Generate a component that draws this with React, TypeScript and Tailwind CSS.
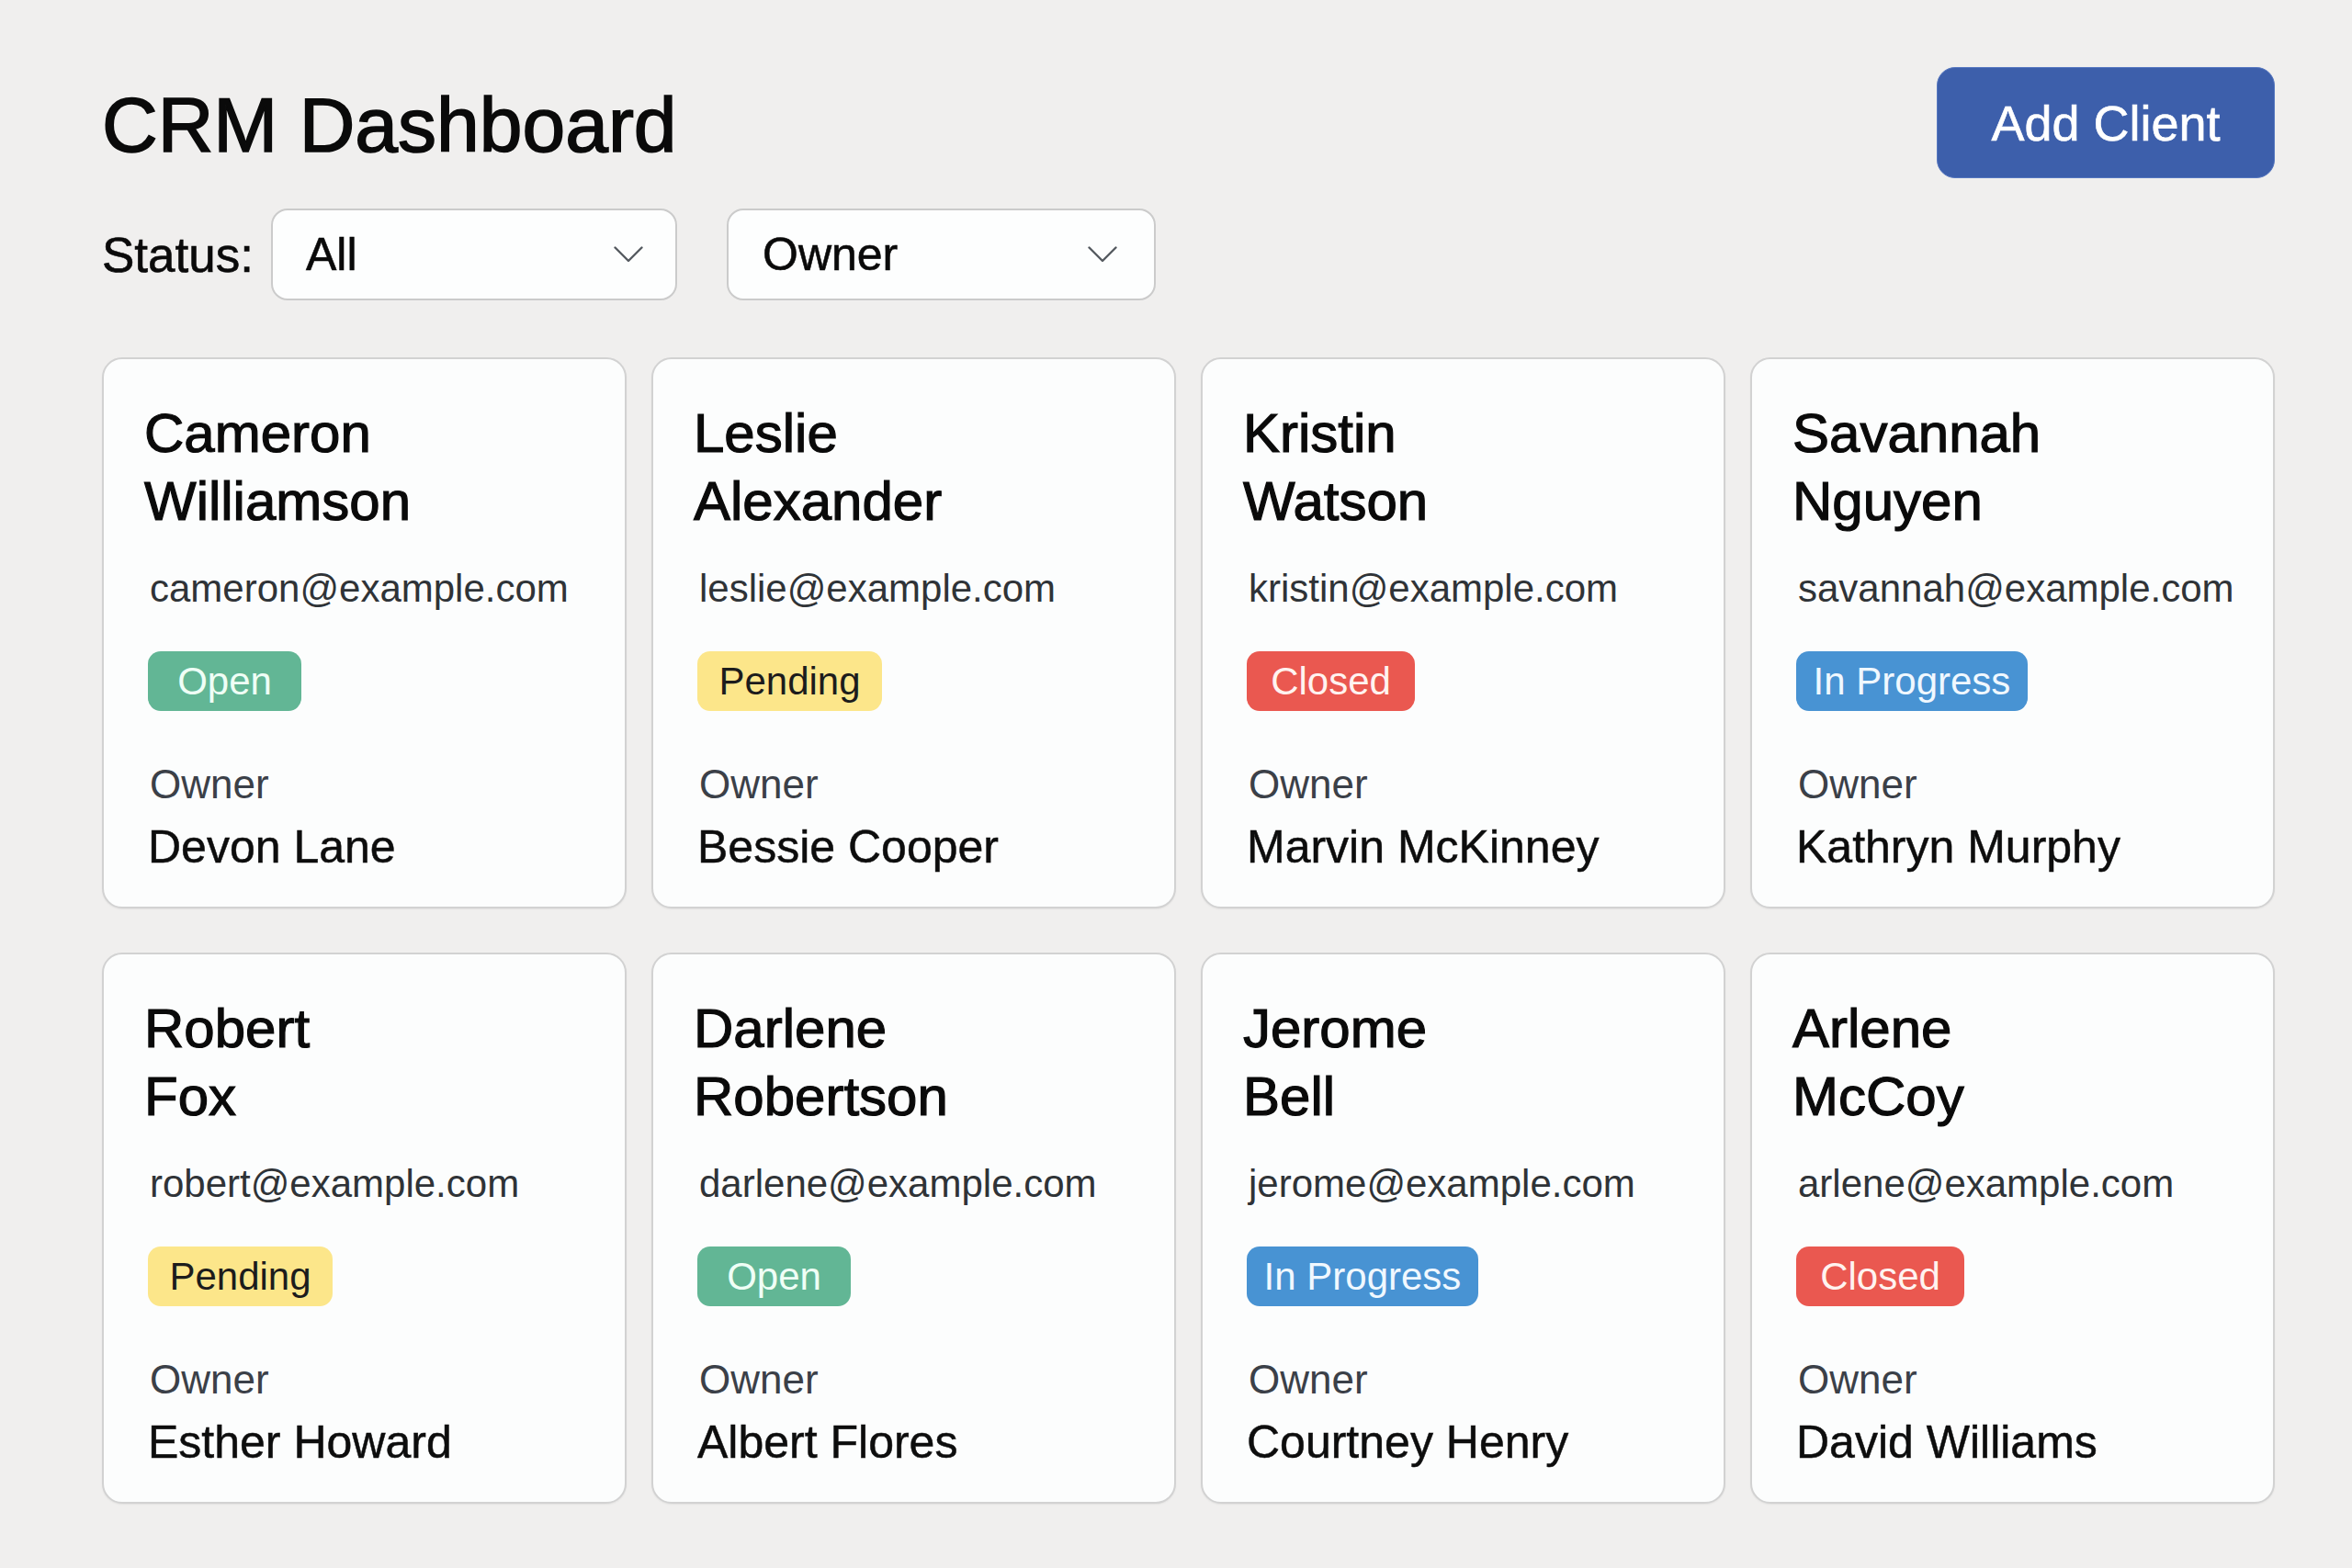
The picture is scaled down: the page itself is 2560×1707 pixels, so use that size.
import React from "react";

type Status = "Open" | "Pending" | "Closed" | "In Progress";

interface Client {
  first: string;
  last: string;
  email: string;
  status: Status;
  owner: string;
}

const clients: Client[] = [
  { first: "Cameron", last: "Williamson", email: "cameron@example.com", status: "Open", owner: "Devon Lane" },
  { first: "Leslie", last: "Alexander", email: "leslie@example.com", status: "Pending", owner: "Bessie Cooper" },
  { first: "Kristin", last: "Watson", email: "kristin@example.com", status: "Closed", owner: "Marvin McKinney" },
  { first: "Savannah", last: "Nguyen", email: "savannah@example.com", status: "In Progress", owner: "Kathryn Murphy" },
  { first: "Robert", last: "Fox", email: "robert@example.com", status: "Pending", owner: "Esther Howard" },
  { first: "Darlene", last: "Robertson", email: "darlene@example.com", status: "Open", owner: "Albert Flores" },
  { first: "Jerome", last: "Bell", email: "jerome@example.com", status: "In Progress", owner: "Courtney Henry" },
  { first: "Arlene", last: "McCoy", email: "arlene@example.com", status: "Closed", owner: "David Williams" },
];

const badgeStyles: Record<Status, string> = {
  Open: "w-[167px] bg-[#62b695] text-[#effff6]",
  Pending: "w-[201px] bg-[#fce68a] text-[#1c1c1c]",
  Closed: "w-[183px] bg-[#ea5850] text-[#fff3f0]",
  "In Progress": "w-[252px] bg-[#4893d3] text-[#f0f8ff]",
};

function Chevron() {
  return (
    <svg width="32" height="18" viewBox="0 0 32 18" fill="none" className="shrink-0">
      <polyline points="1.5,1.5 16,16 30.5,1.5" stroke="#555a60" strokeWidth="2.4" strokeLinecap="round" strokeLinejoin="round" />
    </svg>
  );
}

function SelectBox({ label, className }: { label: string; className: string }) {
  return (
    <div
      className={
        "flex h-[100px] items-center justify-between rounded-[18px] border-2 border-[#cbcbcb] bg-[#fdfefe] text-[50px] leading-none text-[#0a0a0a] [-webkit-text-stroke:0.6px_currentColor] " +
        className
      }
    >
      <span>{label}</span>
      <Chevron />
    </div>
  );
}

function ClientCard({ client }: { client: Client }) {
  return (
    <div className="h-[600px] rounded-[22px] border-2 border-[#d2d2d2] bg-[#fcfdfd] px-[44px] pt-[44px] shadow-[0_1px_2px_rgba(0,0,0,0.06)]">
      <div className="text-[60px] leading-[74px] text-[#0a0a0a] [-webkit-text-stroke:1.2px_currentColor]">
        <div>{client.first}</div>
        <div>{client.last}</div>
      </div>
      <div className="ml-[6px] mt-[33px] text-[42px] leading-[50px] text-[#2f3337]">{client.email}</div>
      <div
        className={
          "ml-[4px] mt-[43px] flex h-[65px] items-center justify-center rounded-[14px] text-[42px] leading-[50px] " +
          badgeStyles[client.status]
        }
      >
        {client.status}
      </div>
      <div className="ml-[6px] mt-[55px] text-[44px] leading-[50px] text-[#3b4048]">Owner</div>
      <div className="ml-[4px] mt-[14px] text-[50px] leading-[58px] text-[#0d0d0d] [-webkit-text-stroke:0.5px_currentColor]">
        {client.owner}
      </div>
    </div>
  );
}

export default function App() {
  return (
    <div className="min-h-screen bg-[#f0efee] pb-[70px] pl-[111px] pr-[84px] pt-[73px] font-['Liberation_Sans',Arial,sans-serif]">
      <div className="flex h-[121px] items-center justify-between">
        <h1 className="pt-[5px] text-[84px] font-normal leading-none text-[#0a0a0a] [-webkit-text-stroke:1.6px_currentColor]">
          CRM Dashboard
        </h1>
        <button className="flex h-[121px] w-[368px] items-center justify-center rounded-[20px] border border-[#5677c0] bg-[#3d5fab] text-[54px] leading-none text-white [-webkit-text-stroke:0.6px_currentColor]">
          Add Client
        </button>
      </div>

      <div className="mt-[33px] flex h-[100px] items-center">
        <span className="mr-[19px] text-[53px] leading-none text-[#0a0a0a] [-webkit-text-stroke:0.6px_currentColor]">Status:</span>
        <SelectBox label="All" className="w-[442px] pl-[36px] pr-[35px]" />
        <SelectBox label="Owner" className="ml-[54px] w-[467px] pl-[37px] pr-[40px]" />
      </div>

      <div className="mt-[62px] grid grid-cols-4 gap-x-[27px] gap-y-[48px]">
        {clients.map((c) => (
          <ClientCard key={c.email} client={c} />
        ))}
      </div>
    </div>
  );
}
